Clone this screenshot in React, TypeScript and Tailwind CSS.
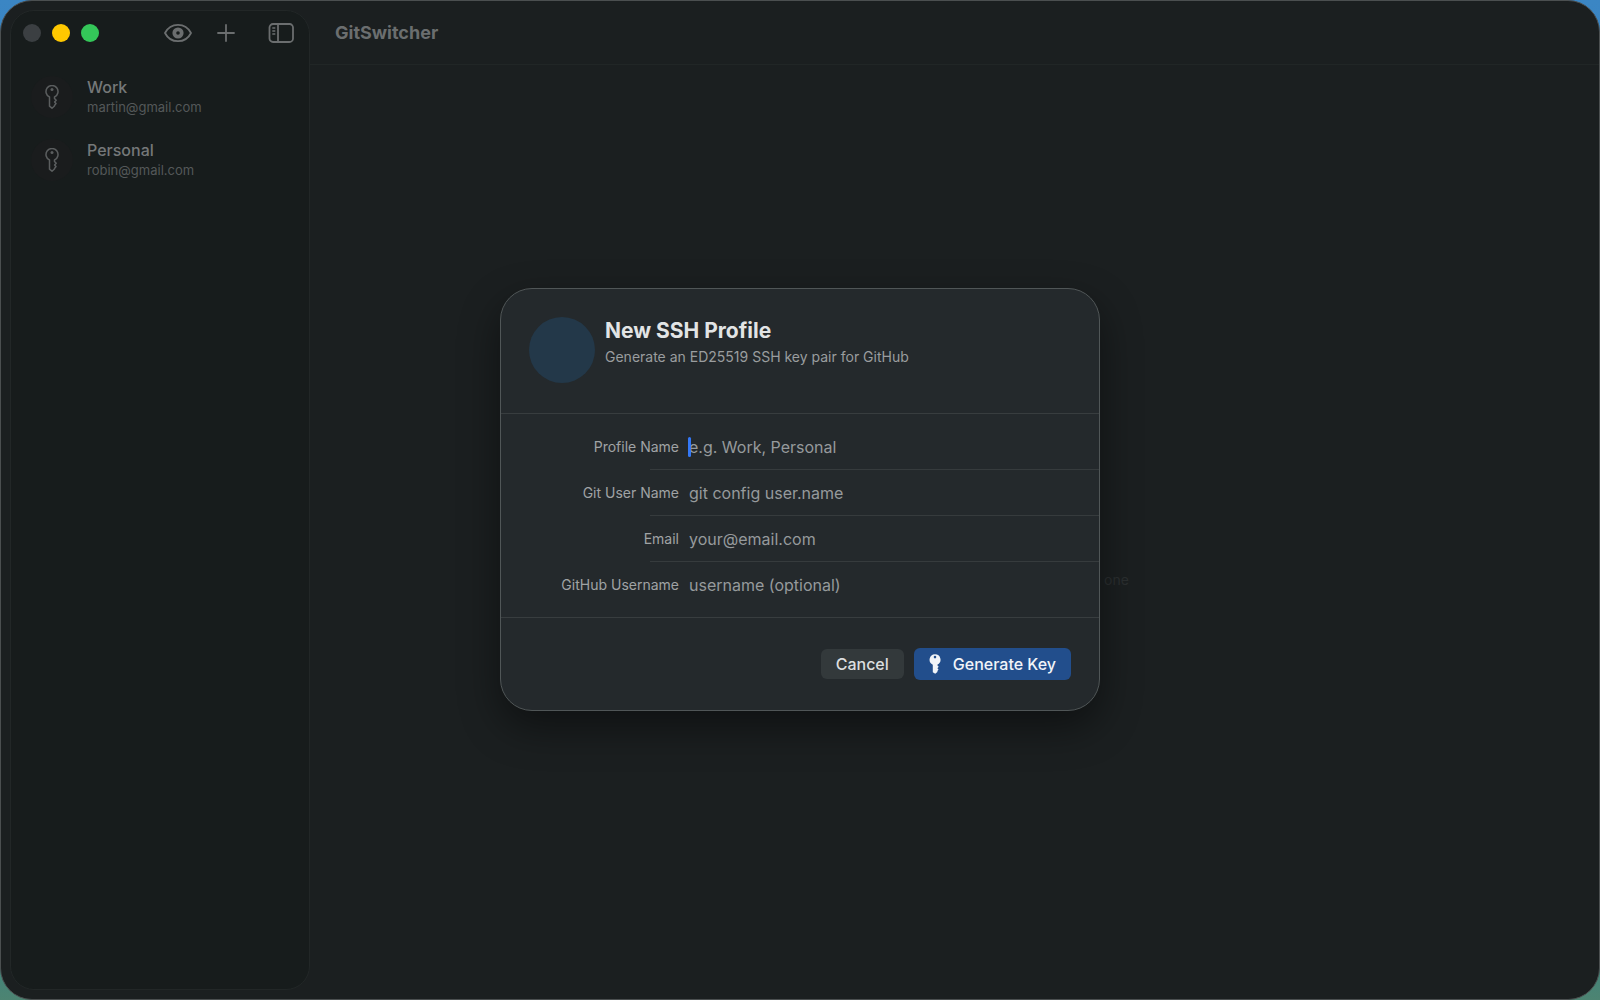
import type { ReactNode } from "react";

const profiles = [
  { name: "Work", email: "martin@gmail.com" },
  { name: "Personal", email: "robin@gmail.com" },
];

const fields = [
  { id: "profile", label: "Profile Name", placeholder: "e.g. Work, Personal", active: true },
  { id: "user", label: "Git User Name", placeholder: "git config user.name" },
  { id: "email", label: "Email", placeholder: "your@email.com" },
  { id: "github", label: "GitHub Username", placeholder: "username (optional)" },
];

function KeyOutline() {
  return (
    <svg className="h-6 w-4" viewBox="0 0 16 24" fill="none" stroke="currentColor" strokeWidth="1.5" strokeLinejoin="round">
      <path d="M5.500 12A6 6 0 1 1 10.500 12V13.400L12.200 15.200L10.600 17L12 18.600L10.500 20.400V21L8 23.200L5.500 21.200Z" />
      <circle cx="8" cy="4.600" r="1.500" fill="currentColor" stroke="none" />
    </svg>
  );
}

function KeySolid() {
  return (
    <svg className="h-5 w-3" viewBox="0 0 12 20" fill="currentColor">
      <path
        fillRule="evenodd"
        d="M6 0.200A5.500 5.500 0 0 1 8.500 10.600V11.600L9.700 12.800L8.400 14.300L9.500 15.600L8.400 17V18L6.200 19.800L3.800 18.200V10.700A5.500 5.500 0 0 1 6 0.200ZM6 1.800A1.300 1.300 0 1 0 6 4.400A1.300 1.300 0 1 0 6 1.800Z"
      />
    </svg>
  );
}

function EyeIcon() {
  return (
    <svg className="h-5 w-7" viewBox="0 0 28 20" fill="none" stroke="currentColor" strokeWidth="1.8">
      <path d="M1 10C3.200 5.600 8 1.800 14 1.800S24.800 5.600 27 10C24.800 14.400 20 18.200 14 18.200S3.200 14.400 1 10Z" strokeLinejoin="round" />
      <circle cx="14" cy="10" r="3.700" strokeWidth="3.800" />
    </svg>
  );
}

function PlusIcon() {
  return (
    <svg className="h-5 w-5" viewBox="0 0 20 20" fill="none" stroke="currentColor" strokeWidth="1.8" strokeLinecap="round">
      <path d="M10 2v16M2 10h16" />
    </svg>
  );
}

function SidebarIcon() {
  return (
    <svg className="h-5 w-[26px]" viewBox="0 0 26 20" fill="none" stroke="currentColor" strokeWidth="1.8">
      <rect x="1.500" y="1" width="23.500" height="18" rx="3.500" />
      <path d="M10 1v18" />
      <path d="M4.300 5h3M4.300 8h3M4.300 11h3" strokeWidth="1.300" />
    </svg>
  );
}

function ToolButton({ label, children }: { label: string; children: ReactNode }) {
  return (
    <button type="button" aria-label={label} className="flex h-5 items-center text-[#6b6e6f]">
      {children}
    </button>
  );
}

export default function App() {
  return (
    <div className="h-screen bg-[linear-gradient(180deg,#3b86c4_0%,#2c7fc0_30%,#2a8088_90%,#4d8472_100%)] font-['Inter','Liberation_Sans',sans-serif]">
      <div className="relative flex h-full overflow-hidden rounded-[32px] border border-[#4b4f50] bg-[#1b1f20]">
        <aside className="my-[9px] ml-[9px] flex w-[300px] shrink-0 flex-col rounded-3xl border border-[#222727] bg-[#171c1c]">
          <div className="flex h-11 items-center pr-[15px] pl-3">
            <div className="flex gap-[11px]">
              <span className="size-[18px] rounded-full bg-[#3b3f42]" />
              <span className="size-[18px] rounded-full bg-[#ffc800]" />
              <span className="size-[18px] rounded-full bg-[#34c759]" />
            </div>
            <div className="ml-auto flex items-center">
              <ToolButton label="Show profile"><EyeIcon /></ToolButton>
              <div className="ml-6"><ToolButton label="Add profile"><PlusIcon /></ToolButton></div>
              <div className="ml-8"><ToolButton label="Toggle sidebar"><SidebarIcon /></ToolButton></div>
            </div>
          </div>
          <ul className="flex flex-col gap-[23px] pt-[22px] pl-5">
            {profiles.map((p) => (
              <li key={p.name} className="flex h-10 items-center gap-3.5">
                <span className="flex size-[42px] items-center justify-center rounded-full bg-[#1a1c1d] text-[#5b5e5f]">
                  <KeyOutline />
                </span>
                <span className="flex flex-col">
                  <span className="text-base leading-5 font-medium text-[#757879]">{p.name}</span>
                  <span className="text-[13px] leading-5 text-[#545859]">{p.email}</span>
                </span>
              </li>
            ))}
          </ul>
        </aside>

        <main className="flex min-w-0 flex-1 flex-col">
          <header className="flex h-16 items-center border-b border-[#212626] pl-[25px]">
            <h1 className="text-lg font-bold text-[#6b6e6f]">GitSwitcher</h1>
          </header>
          <div className="flex flex-1 items-center justify-center">
            <p className="pt-24 pl-[324px] text-sm text-[#2b2f30]">one</p>
          </div>
        </main>

        <div className="absolute inset-0 flex items-center justify-center pb-px">
          <form
            role="dialog"
            aria-labelledby="dialog-title"
            className="w-[600px] overflow-hidden rounded-[32px] border border-[#505657] bg-[#24292c] shadow-[0_16px_40px_rgba(0,0,0,0.45)]"
            onSubmit={(e) => e.preventDefault()}
          >
            <div className="flex h-[125px] gap-2.5 border-b border-[#383d3f] px-7 pt-7">
              <span className="size-[66px] shrink-0 rounded-full bg-[#233849]" />
              <div>
                <h2 id="dialog-title" className="text-[21px] leading-7 font-bold text-[#e2e4e5]">New SSH Profile</h2>
                <p className="text-sm leading-6 text-[#9a9d9f]">Generate an ED25519 SSH key pair for GitHub</p>
              </div>
            </div>

            <div className="border-b border-[#383d3f] py-2.5">
              {fields.map((f, i) => (
                <div key={f.id}>
                  {i > 0 && <div className="ml-[149px] h-px bg-[#363b3d]" />}
                  <div className="relative flex h-[45px] items-center gap-2.5">
                    <label htmlFor={f.id} className="w-[178px] shrink-0 text-right text-sm text-[#a0a3a5]">{f.label}</label>
                    <input
                      id={f.id}
                      type="text"
                      placeholder={f.placeholder}
                      className="min-w-0 flex-1 bg-transparent text-base text-[#e2e4e5] outline-none placeholder:text-[#969a9c]"
                    />
                    {f.active && <span className="absolute left-[187px] h-5 w-[3px] rounded-full bg-[#3478f6]" />}
                  </div>
                </div>
              ))}
            </div>

            <div className="flex h-[92px] items-center justify-end gap-2.5 px-7">
              <button type="button" className="h-[30px] rounded-md bg-[#33393b] px-[15px] text-base font-medium text-[#dcdedf]">Cancel</button>
              <button type="submit" className="flex h-8 items-center gap-3 rounded-md bg-[#224e8c] px-[15px] text-base font-medium text-[#f1f4f8]">
                <KeySolid />
                Generate Key
              </button>
            </div>
          </form>
        </div>
      </div>
    </div>
  );
}
